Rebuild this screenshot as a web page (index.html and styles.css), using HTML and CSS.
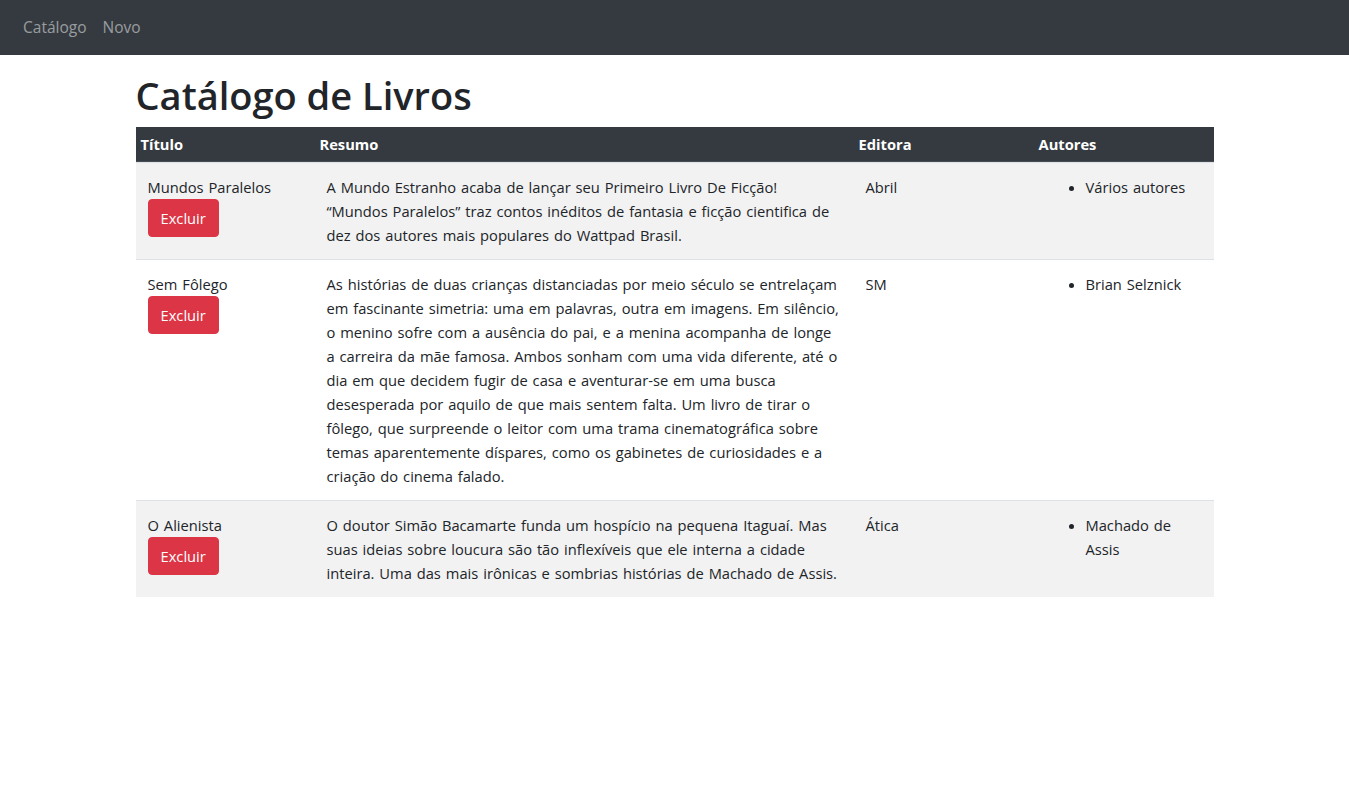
FILE: index.html
```html
<!DOCTYPE html>
<html lang="pt-BR">
<head>
<meta charset="utf-8">
<title>Catálogo de Livros</title>
<link rel="stylesheet" href="styles.css">
</head>
<body>
<nav class="navbar">
  <a class="nav-link" href="#">Catálogo</a>
  <a class="nav-link" href="#">Novo</a>
</nav>
<main class="container">
  <h1 class="page-title">Catálogo de Livros</h1>
  <table class="book-table">
    <colgroup>
      <col class="col-title">
      <col class="col-summary">
      <col class="col-publisher">
      <col class="col-authors">
    </colgroup>
    <thead>
      <tr>
        <th>Título</th>
        <th>Resumo</th>
        <th>Editora</th>
        <th>Autores</th>
      </tr>
    </thead>
    <tbody>
      <tr class="striped">
        <td>
          <div>Mundos Paralelos</div>
          <button class="btn-danger" type="button">Excluir</button>
        </td>
        <td>A Mundo Estranho acaba de lançar seu Primeiro Livro De Ficção! “Mundos Paralelos” traz contos inéditos de fantasia e ficção cientifica de dez dos autores mais populares do Wattpad Brasil.</td>
        <td>Abril</td>
        <td><ul class="authors"><li>Vários autores</li></ul></td>
      </tr>
      <tr>
        <td>
          <div>Sem Fôlego</div>
          <button class="btn-danger" type="button">Excluir</button>
        </td>
        <td>As histórias de duas crianças distanciadas por meio século se entrelaçam em fascinante simetria: uma em palavras, outra em imagens. Em silêncio, o menino sofre com a ausência do pai, e a menina acompanha de longe a carreira da mãe famosa. Ambos sonham com uma vida diferente, até o dia em que decidem fugir de casa e aventurar-se em uma busca desesperada por aquilo de que mais sentem falta. Um livro de tirar o fôlego, que surpreende o leitor com uma trama cinematográfica sobre temas aparentemente díspares, como os gabinetes de curiosidades e a criação do cinema falado.</td>
        <td>SM</td>
        <td><ul class="authors"><li>Brian Selznick</li></ul></td>
      </tr>
      <tr class="striped">
        <td>
          <div>O Alienista</div>
          <button class="btn-danger" type="button">Excluir</button>
        </td>
        <td>O doutor Simão Bacamarte funda um hospício na pequena Itaguaí. Mas suas ideias sobre loucura são tão inflexíveis que ele interna a cidade inteira. Uma das mais irônicas e sombrias histórias de Machado de Assis.</td>
        <td>Ática</td>
        <td><ul class="authors"><li>Machado de Assis</li></ul></td>
      </tr>
    </tbody>
  </table>
</main>
</body>
</html>
```

FILE: styles.css
```css
* { box-sizing: border-box; }

body {
  margin: 0;
  font-family: "Open Sans", "Noto Sans", sans-serif;
  font-size: 15px;
  line-height: 24px;
  color: #212529;
  background: #fff;
}

.navbar {
  height: 55px;
  background: #343a40;
  display: flex;
  align-items: center;
  padding: 0 15px 2px;
  font-size: 15.5px;
}

.nav-link {
  color: rgba(255, 255, 255, 0.5);
  text-decoration: none;
  padding: 0 8px;
}

.container {
  width: 1078px;
  margin: 0 auto;
}

.page-title {
  margin: 16px 0 8px;
  font-size: 38px;
  line-height: 48px;
  font-weight: 600;
  letter-spacing: 0;
}

.book-table {
  width: 100%;
  table-layout: fixed;
  border-collapse: separate;
  border-spacing: 0;
  font-size: 14.7px;
  word-spacing: 1.1px;
}

.col-title { width: 179px; }
.col-summary { width: 539px; }
.col-publisher { width: 180px; }
.col-authors { width: 180px; }

.book-table th {
  background: #343a40;
  color: #fff;
  text-align: left;
  font-weight: 700;
  padding: 5px;
  border-bottom: 1px solid #454d55;
}

.book-table td {
  vertical-align: top;
  padding: 12px;
  border-top: 1px solid #dee2e6;
}

.book-table tr.striped td {
  background: #f2f2f2;
}

.btn-danger {
  display: block;
  font: inherit;
  word-spacing: normal;
  color: #fff;
  background: #dc3545;
  border: 1px solid #dc3545;
  border-radius: 4px;
  padding: 6px 12px;
  line-height: 24px;
  cursor: pointer;
}

.authors {
  margin: 0 0 16px;
  padding-left: 40px;
}
```
